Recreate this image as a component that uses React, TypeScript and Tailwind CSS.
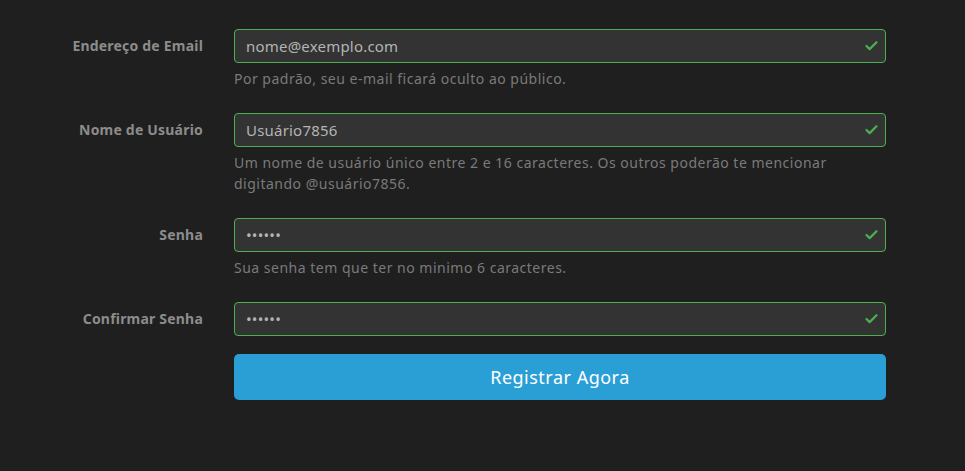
import { Check } from "lucide-react";

const fields = [
  {
    label: "Endereço de Email",
    value: "nome@exemplo.com",
    type: "text",
    help: "Por padrão, seu e-mail ficará oculto ao público.",
  },
  {
    label: "Nome de Usuário",
    value: "Usuário7856",
    type: "text",
    help: "Um nome de usuário único entre 2 e 16 caracteres. Os outros poderão te mencionar digitando @usuário7856.",
  },
  {
    label: "Senha",
    value: "123456",
    type: "password",
    help: "Sua senha tem que ter no minimo 6 caracteres.",
  },
  {
    label: "Confirmar Senha",
    value: "123456",
    type: "password",
    help: null,
  },
];

function Field({
  label,
  value,
  type,
  help,
}: {
  label: string;
  value: string;
  type: string;
  help: string | null;
}) {
  return (
    <div className="grid grid-cols-[161px_652px] gap-x-[31px]">
      <label className="pt-[8px] text-right text-[14px] font-bold leading-[18px] tracking-[0.2px] text-[#8c8c8c]">
        {label}
      </label>
      <div className="flex flex-col">
        <div className="relative">
          <input
            type={type}
            defaultValue={value}
            readOnly
            className="h-[34px] w-full rounded-[4px] border border-[#4caf50] bg-[#333333] px-[11px] text-[15px] tracking-[0.2px] text-[#b4b4b4] outline-none"
          />
          <Check
            className="absolute right-[7px] top-1/2 h-[15px] w-[15px] -translate-y-1/2 text-[#4caf50]"
            strokeWidth={3.5}
          />
        </div>
        {help && (
          <p className="mt-[5px] text-[14px] leading-[21px] tracking-[0.5px] text-[#7a7a7a]">
            {help}
          </p>
        )}
      </div>
    </div>
  );
}

export default function App() {
  return (
    <div
      className="min-h-[471px] w-full bg-[#1f1f1f] pl-[42px] pt-[29px]"
      style={{ fontFamily: '"Noto Sans", "Open Sans", sans-serif' }}
    >
      <div className="flex flex-col gap-[24px]">
        {fields.map((f) => (
          <Field key={f.label} {...f} />
        ))}
      </div>
      <div className="mt-[18px] grid grid-cols-[161px_652px] gap-x-[31px]">
        <div />
        <button
          type="button"
          className="h-[46px] w-full rounded-[5px] bg-[#2a9fd6] text-[18px] tracking-[0.5px] text-white"
        >
          Registrar Agora
        </button>
      </div>
    </div>
  );
}
